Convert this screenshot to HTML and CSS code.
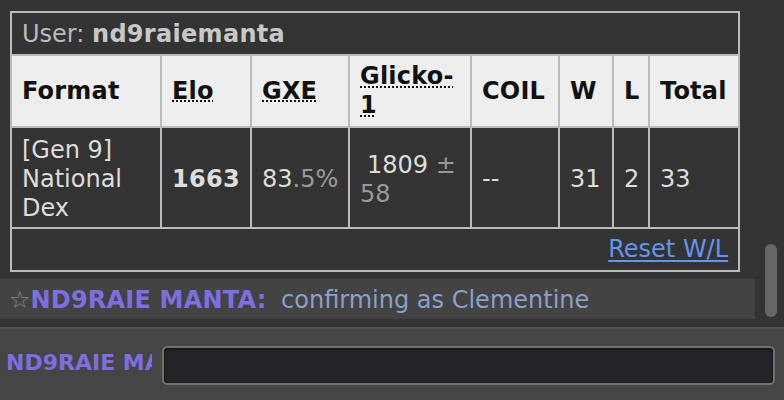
FILE: index.html
```html
<!DOCTYPE html>
<html>
<head>
<meta charset="utf-8">
<link rel="stylesheet" href="styles.css">
</head>
<body>
<div class="app">
  <div class="main">
    <div class="log">
      <table class="ladder">
        <colgroup>
          <col class="c-format"><col class="c-elo"><col class="c-gxe"><col class="c-glicko"><col class="c-coil"><col class="c-w"><col class="c-l"><col class="c-total">
        </colgroup>
        <tr>
          <th class="user" colspan="8">User: <strong>nd9raiemanta</strong></th>
        </tr>
        <tr class="head">
          <th>Format</th>
          <th><abbr>Elo</abbr></th>
          <th><abbr>GXE</abbr></th>
          <th><abbr>Glicko-1</abbr></th>
          <th>COIL</th>
          <th>W</th>
          <th>L</th>
          <th>Total</th>
        </tr>
        <tr class="body">
          <td>[Gen 9] National Dex</td>
          <td><strong>1663</strong></td>
          <td>83<small>.5%</small></td>
          <td><span class="indent">1809</span><small> ± 58</small></td>
          <td>--</td>
          <td>31</td>
          <td>2</td>
          <td>33</td>
        </tr>
        <tr>
          <td class="foot" colspan="8"><a class="reset" href="#">Reset W/L</a></td>
        </tr>
      </table>
      <div class="chat"><span class="star">☆</span><strong class="name">ND9RAIE MANTA:</strong> <em class="msg">confirming as Clementine</em></div>
    </div>
    <div class="scroll"><div class="thumb"></div></div>
  </div>
  <div class="bar">
    <div class="label">ND9RAIE MANTA</div>
    <div class="input"></div>
  </div>
</div>
</body>
</html>
```
FILE: styles.css
```css
html, body {
  margin: 0;
  padding: 0;
  background: #333;
  height: 400px;
  overflow: hidden;
}
body {
  font-family: "DejaVu Sans", Verdana, sans-serif;
  font-size: 24px;
  line-height: 29px;
  color: #ddd;
}
.app {
  width: 784px;
  height: 400px;
  display: flex;
  flex-direction: column;
}
.main {
  display: flex;
  height: 327px;
  flex: none;
}
.log {
  width: 755px;
  padding-top: 11px;
  box-sizing: border-box;
}
.ladder {
  margin-left: 10px;
  border-collapse: collapse;
  table-layout: fixed;
  width: 728px;
  border: 2px solid #bbb;
}
.c-format { width: 150px; }
.c-elo { width: 90px; }
.c-gxe { width: 98px; }
.c-glicko { width: 122px; }
.c-coil { width: 88px; }
.c-w { width: 54px; }
.c-l { width: 36px; }
.c-total { width: 90px; }
.ladder th, .ladder td {
  border: 2px solid #bbb;
  padding: 6px 10px;
  text-align: left;
  vertical-align: middle;
}
.ladder th.user {
  background: #333;
  color: #bbb;
  font-weight: normal;
  padding-top: 7px;
  padding-bottom: 5px;
}
.ladder th.user strong {
  color: #c8c8c8;
  letter-spacing: 0.3px;
}
.head th {
  background: #eee;
  color: #111;
  font-weight: bold;
  letter-spacing: 0.2px;
}
abbr {
  text-decoration: underline dotted 2px;
  text-underline-offset: 2px;
}
.body td {
  color: #ddd;
  padding-top: 8px;
  padding-bottom: 4px;
}
.body strong {
  letter-spacing: 0.3px;
}
.body small {
  font-size: 24px;
  color: #999;
}
.indent {
  margin-left: 7px;
}
.ladder td.foot {
  text-align: right;
}
.reset {
  color: #6494ed;
  text-decoration: underline;
  text-underline-offset: 3px;
}
.chat {
  margin-top: 7px;
  background: #434343;
  padding: 7px 0 4px 9px;
  white-space: nowrap;
}
.star {
  color: #888;
}
.name {
  color: #7d6fe0;
  font-weight: bold;
  letter-spacing: 0.2px;
}
.msg {
  font-style: normal;
  color: #8c9fc7;
  margin-left: 7px;
}
.scroll {
  width: 29px;
  flex: none;
}
.thumb {
  margin-top: 244px;
  margin-left: 10px;
  width: 12px;
  height: 73px;
  border-radius: 6px;
  background: #666;
}
.bar {
  flex: 1;
  border-top: 2px solid #525252;
  background: #454545;
  display: flex;
  align-items: flex-start;
  padding-top: 17px;
}
.label {
  width: 146px;
  margin-left: 6px;
  overflow: hidden;
  white-space: nowrap;
  color: #7d6fe0;
  font-weight: bold;
  font-size: 22px;
  line-height: 33px;
}
.input {
  margin-left: 10px;
  width: 613px;
  height: 39px;
  box-sizing: border-box;
  border: 2px solid #707070;
  border-radius: 5px;
  background: #232427;
  box-shadow: inset 0 1px 3px rgba(0,0,0,0.6);
}
```
